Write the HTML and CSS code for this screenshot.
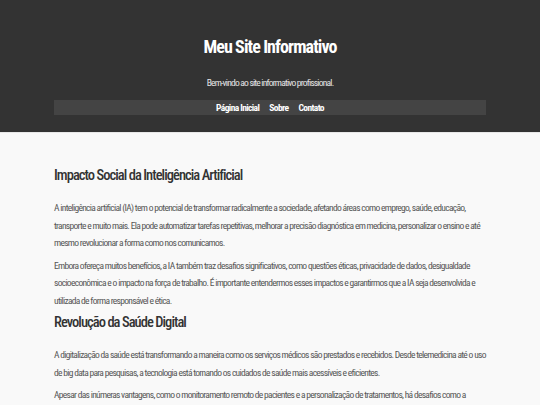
FILE: index.html
```html
<!DOCTYPE html>
<html lang="pt-BR">
<head>
<meta charset="utf-8">
<title>Meu Site Informativo</title>
<link rel="stylesheet" href="styles.css">
</head>
<body>
<header class="site-header">
  <h1 class="site-title">Meu Site Informativo</h1>
  <p class="site-tagline">Bem-vindo ao site informativo profissional.</p>
  <nav class="site-nav">
    <a href="#">Página Inicial</a>
    <a href="#">Sobre</a>
    <a href="#">Contato</a>
  </nav>
</header>
<main class="content">
  <section class="article">
    <h2>Impacto Social da Inteligência Artificial</h2>
    <p>A inteligência artificial (IA) tem o potencial de transformar radicalmente a sociedade, afetando áreas como emprego, saúde, educação, transporte e muito mais. Ela pode automatizar tarefas repetitivas, melhorar a precisão diagnóstica em medicina, personalizar o ensino e até mesmo revolucionar a forma como nos comunicamos.</p>
    <p>Embora ofereça muitos benefícios, a IA também traz desafios significativos, como questões éticas, privacidade de dados, desigualdade socioeconômica e o impacto na força de trabalho. É importante entendermos esses impactos e garantirmos que a IA seja desenvolvida e utilizada de forma responsável e ética.</p>
  </section>
  <section class="article">
    <h2>Revolução da Saúde Digital</h2>
    <p>A digitalização da saúde está transformando a maneira como os serviços médicos são prestados e recebidos. Desde telemedicina até o uso de big data para pesquisas, a tecnologia está tornando os cuidados de saúde mais acessíveis e eficientes.</p>
    <p>Apesar das inúmeras vantagens, como o monitoramento remoto de pacientes e a personalização de tratamentos, há desafios como a segurança dos dados, a desigualdade no acesso e a necessidade de regulamentação adequada.</p>
  </section>
</main>
</body>
</html>
```

FILE: styles.css
```css
html, body {
  margin: 0;
  padding: 0;
}
body {
  background: #f9f9f9;
  font-family: Roboto, "Liberation Sans", sans-serif;
  font-stretch: 75%;
  color: #555;
}
.site-header {
  background: #333;
  color: #fff;
  height: 133px;
  box-sizing: border-box;
  padding: 36px 54px 0;
  text-align: center;
  border-bottom: 1px solid #e8e8e8;
}
.site-title {
  margin: 0;
  font-size: 18px;
  line-height: 22px;
  font-weight: bold;
  letter-spacing: -0.9px;
}
.site-tagline {
  margin: 19px 0 0;
  font-size: 9.5px;
  line-height: 12px;
  letter-spacing: -0.8px;
  color: #e6e6e6;
}
.site-nav {
  margin-top: 11px;
  background: #444;
  height: 15px;
  display: flex;
  justify-content: center;
  align-items: center;
  gap: 10px;
}
.site-nav a {
  color: #fff;
  text-decoration: none;
  font-weight: bold;
  font-size: 9.5px;
  letter-spacing: -0.6px;
}
.content {
  padding: 34px 54px 0;
}
.article h2 {
  margin: 0 0 14px;
  font-size: 14.5px;
  line-height: 18px;
  font-weight: 500;
  letter-spacing: -0.95px;
  color: #333;
}
.article p {
  margin: 0 0 5px;
  font-size: 9.5px;
  line-height: 17.5px;
  letter-spacing: -0.7px;
}
.article + .article {
  margin-top: 5px;
}
```
